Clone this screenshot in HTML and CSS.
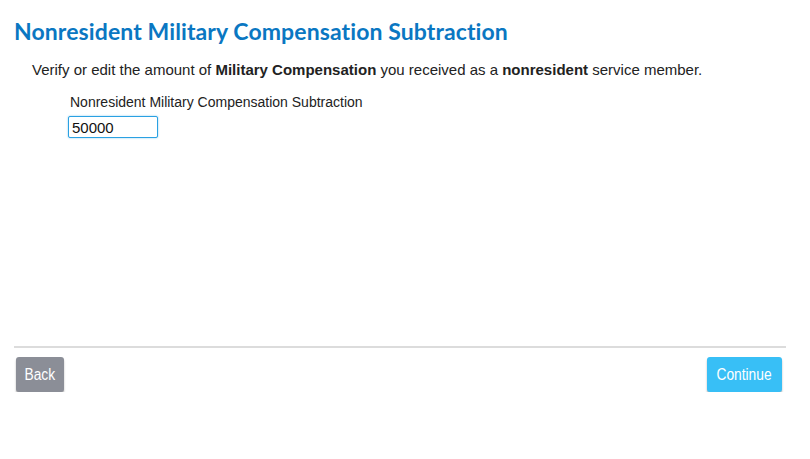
FILE: index.html
```html
<!DOCTYPE html>
<html>
<head>
<meta charset="utf-8">
<link rel="stylesheet" href="styles.css">
</head>
<body>
<div class="page">
  <h1 class="title">Nonresident Military Compensation Subtraction</h1>
  <p class="intro">Verify or edit the amount of <b>Military Compensation</b> you received as a <b>nonresident</b> service member.</p>
  <div class="field">
    <label class="label" for="amt">Nonresident Military Compensation Subtraction</label>
    <input class="input" id="amt" type="text" value="50000">
  </div>
  <div class="spacer"></div>
  <hr class="divider">
  <div class="actions">
    <button class="btn btn-back"><span>Back</span></button>
    <button class="btn btn-continue"><span>Continue</span></button>
  </div>
</div>
</body>
</html>
```
FILE: styles.css
```css
html, body {
  margin: 0;
  padding: 0;
  background: #fff;
}
.page {
  padding: 0 24px 0 14px;
  font-family: "Liberation Sans", Arial, sans-serif;
  color: #222;
}
.title {
  margin: 0;
  padding-top: 17px;
  font-family: Lato, "Open Sans", sans-serif;
  font-weight: 700;
  font-size: 23px;
  line-height: 28px;
  color: #0a77c2;
  letter-spacing: 0.1px;
}
.intro {
  margin: 15px 0 0 18px;
  font-size: 15px;
  line-height: 20px;
  color: #222;
}
.intro b { font-weight: 700; }
.field {
  margin: 13px 0 0 54px;
  display: flex;
  flex-direction: column;
  align-items: flex-start;
}
.label {
  padding-left: 2px;
  font-size: 14px;
  line-height: 18px;
  color: #222;
}
.input {
  margin-top: 5px;
  box-sizing: border-box;
  width: 90px;
  height: 22px;
  border: 1px solid #2aa1e2;
  border-radius: 2px;
  padding: 1px 3px;
  font-family: "Liberation Sans", Arial, sans-serif;
  font-size: 15px;
  color: #111;
  outline: none;
  box-shadow: 0 0 2px rgba(42,161,226,0.6);
}
.spacer { height: 208px; }
.divider {
  margin: 0;
  border: 0;
  height: 2px;
  background: #dcdcdc;
}
.actions {
  margin-top: 9px;
  display: flex;
  justify-content: space-between;
  padding: 0 4px 0 2px;
}
.btn {
  height: 35px;
  border: 0;
  border-radius: 3px;
  color: #fff;
  font-family: "Liberation Sans", Arial, sans-serif;
  font-size: 16px;
  box-shadow: 0 2px 2px rgba(0,0,0,0.3);
  padding: 0;
  display: flex;
  align-items: center;
  justify-content: center;
}
.btn span {
  display: inline-block;
  transform: scaleX(0.86);
}
.btn-back {
  width: 48px;
  background: #8b8e97;
}
.btn-continue {
  width: 75px;
  background: #38bff6;
}
```
